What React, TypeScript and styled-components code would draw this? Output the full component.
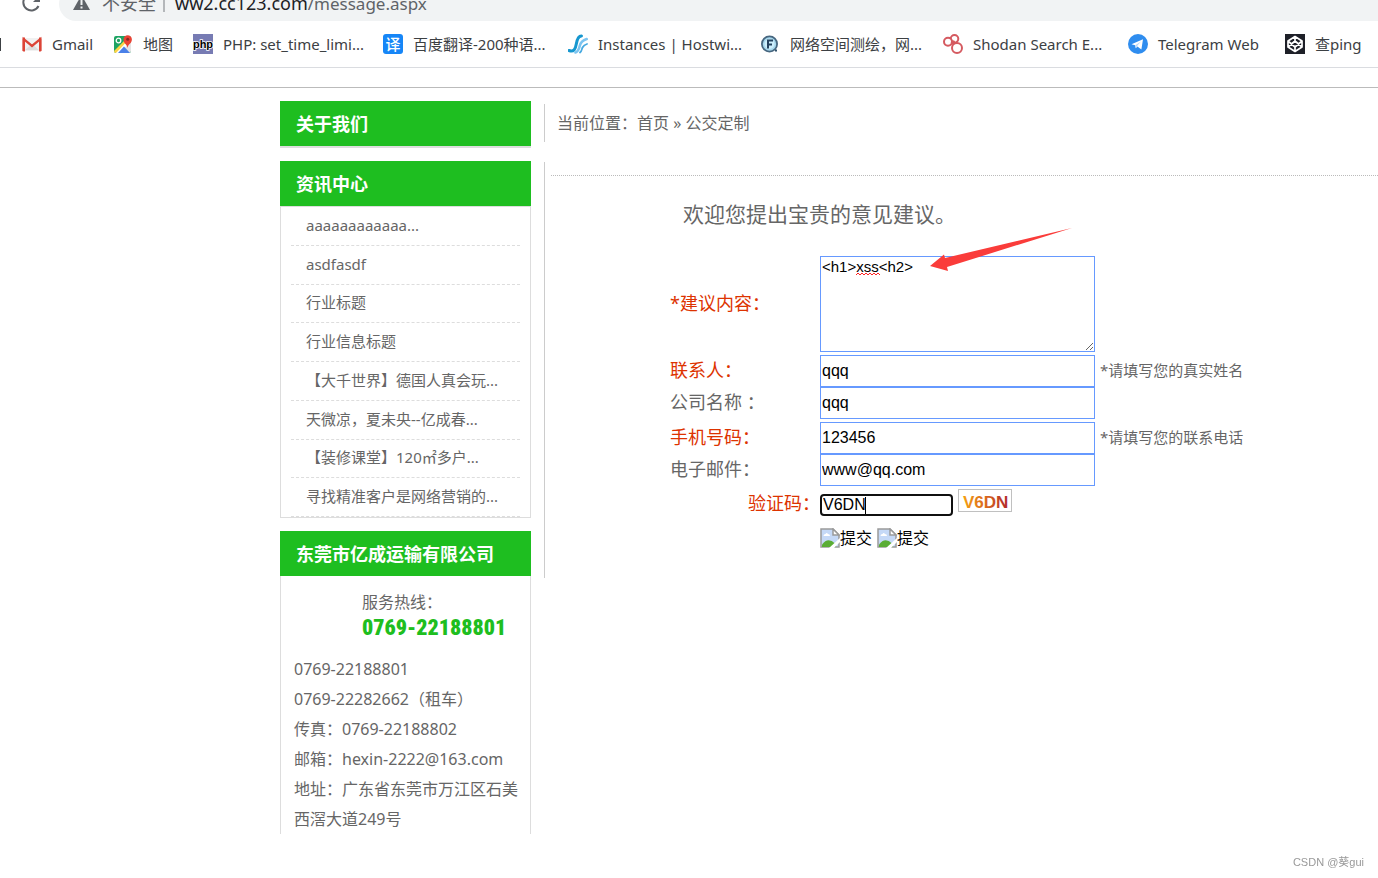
import React from "react";
import styled, { createGlobalStyle } from "styled-components";

const sans = `"Noto Sans", "Noto Sans CJK SC", sans-serif`;
const arial = `"Liberation Sans", "Noto Sans CJK SC", sans-serif`;
const green = "#1ebe20";
const red = "#dd3300";
const grey = "#666";
const line = "#ddd";

const GlobalStyle = createGlobalStyle`
  * { box-sizing: border-box; }
  body { margin: 0; background: #fff; color: ${grey}; font-family: ${sans}; font-size: 16px; }
  a { color: inherit; text-decoration: none; }
  h1, h2, p, ul { margin: 0; padding: 0; font-weight: 400; }
  ul { list-style: none; }
`;

/* Browser chrome */
const Toolbar = styled.div`
  display: flex;
  align-items: flex-end;
  gap: 18px;
  height: 21px;
  padding-left: 22px;
  overflow: hidden;
`;
const ToolButton = styled.button`
  display: flex;
  align-items: center;
  height: 34px;
  padding: 0 0 2px;
  border: 0;
  background: none;
  color: #5f6368;
`;
const AddressBar = styled.div`
  display: flex;
  flex: 1;
  align-items: center;
  height: 34px;
  padding: 0 0 2px 14px;
  border-radius: 17px 0 0 17px;
  background: #f1f3f4;
  color: #5f6368;
  font-size: 18px;
  line-height: 24px;
  white-space: pre;
`;
const Security = styled.span`
  margin-left: 12px;
`;
const Divider = styled.span`
  width: 2px;
  height: 18px;
  margin: 0 10px 0 7px;
  background: #b4b7ba;
`;
const Host = styled.span`
  color: #202124;
`;
const Path = styled.span`
  font-size: 17px;
`;
const Bookmarks = styled.nav`
  display: flex;
  align-items: center;
  gap: 21px;
  height: 47px;
  overflow: hidden;
  border-bottom: 1px solid #dadce0;
`;
const BookmarkTail = styled.span`
  width: 1px;
  height: 13px;
  background: #3c4043;
`;
const Bookmark = styled.a`
  display: flex;
  flex: none;
  align-items: center;
  gap: 10px;
  color: #3c4043;
  font-size: 15px;
  line-height: 20px;
  white-space: nowrap;
`;
const BookmarkLabel = styled.span<{ $width: number }>`
  width: ${(p) => p.$width}px;
`;

/* Page */
const Page = styled.div`
  display: flex;
  align-items: flex-start;
  gap: 13px;
  margin-top: 19px;
  padding: 13px 0 0 280px;
  border-top: 1px solid #bbb;
`;
const Sidebar = styled.aside`
  display: flex;
  flex: none;
  flex-direction: column;
  gap: 13px;
  width: 251px;
`;
const PanelTitle = styled.h2<{ $ruled?: boolean }>`
  padding: 2px 0 0 16px;
  border-bottom: ${(p) => (p.$ruled ? `2px solid ${line}` : "0")};
  background: ${green};
  background-clip: padding-box;
  color: #fff;
  font-size: 18px;
  font-weight: 700;
  line-height: 43px;
`;
const NewsList = styled.ul`
  display: flex;
  flex-direction: column;
  height: 312px;
  padding: 0 10px;
  border: 1px solid ${line};
`;
const NewsItem = styled.li`
  display: flex;
  flex: 1;
  align-items: center;
  padding: 0 0 2px 15px;
  border-bottom: 1px dashed ${line};
  font-size: 15px;
  line-height: 20px;
`;
const ContactPanel = styled.div`
  padding: 14px 0 0 13px;
  border: solid ${line};
  border-width: 0 1px;
`;
const Hotline = styled.p`
  padding-left: 68px;
  line-height: 24px;
`;
const HotlineNumber = styled.strong`
  display: block;
  color: ${green};
  font-family: "Roboto Condensed", "Liberation Sans", sans-serif;
  font-size: 22px;
  font-weight: 900;
  line-height: 28px;
  white-space: nowrap;
`;
const ContactLines = styled.div`
  padding-top: 12px;
  line-height: 30px;
`;

const Main = styled.main`
  flex: 1;
  min-width: 0;
  padding-top: 3px;
`;
const Breadcrumb = styled.nav`
  height: 38px;
  padding-left: 12px;
  border-left: 1px solid #ccc;
  line-height: 38px;
`;
const Content = styled.section`
  margin-top: 20px;
  min-height: 416px;
  padding: 13px 0 0 6px;
  border-left: 1px solid #ccc;
`;
const Heading = styled.h1`
  padding: 23px 0 0 132px;
  border-top: 1px dotted #bbb;
  font-size: 21px;
  line-height: 30px;
`;
const Form = styled.form`
  position: relative;
  display: flex;
  flex-direction: column;
  gap: 3px;
  margin-top: 27px;
  padding-left: 119px;
`;
const Field = styled.div`
  display: flex;
  align-items: center;
`;
const CodeField = styled(Field)`
  align-items: flex-end;
  height: 27px;
`;
const Label = styled.label<{ $required?: boolean; $right?: boolean }>`
  width: 150px;
  padding-bottom: 2px;
  color: ${(p) => (p.$required ? red : grey)};
  font-size: 18px;
  line-height: 22px;
  text-align: ${(p) => (p.$right ? "right" : "left")};
`;
const TextArea = styled.textarea`
  display: block;
  width: 275px;
  height: 96px;
  padding: 1px;
  border: 1px solid #6699ff;
  color: #000;
  font: 15px/18px ${arial};
`;
const TextInput = styled.input`
  width: 275px;
  height: 32px;
  padding: 1px;
  border: 1px solid #6699ff;
  color: #000;
  font: 16px/18px ${arial};
`;
const CodeBox = styled.span`
  position: relative;
  display: flex;
`;
const CodeInput = styled.input`
  width: 133px;
  height: 22px;
  padding: 0 1px;
  border: 2px solid #101010;
  border-radius: 4px;
  outline: 0;
  color: #000;
  font: 16px/18px ${arial};
`;
const Caret = styled.span`
  position: absolute;
  top: 3px;
  left: 45px;
  width: 1px;
  height: 17px;
  background: #000;
`;
const Captcha = styled.svg`
  align-self: flex-start;
  margin-left: 5px;
`;
const Hint = styled.span`
  margin-left: 5px;
  padding-bottom: 2px;
  font-size: 15px;
  line-height: 20px;
`;
const Actions = styled.div`
  display: flex;
  gap: 5px;
  padding: 9px 0 0 150px;
`;
const ImageButton = styled.button`
  display: flex;
  align-items: center;
  padding: 0;
  border: 0;
  background: none;
  color: #000;
  font: 16px/20px ${sans};
`;
const Squiggle = styled.svg`
  position: absolute;
  top: 16px;
  left: 305px;
`;
const Arrow = styled.svg`
  position: absolute;
  top: -28px;
  left: 379px;
  pointer-events: none;
`;
const Watermark = styled.footer`
  position: fixed;
  right: 14px;
  bottom: 8px;
  color: #999;
  font: 11px/16px ${arial};
`;

const GmailIcon = () => (
  <svg width="20" height="20" viewBox="0 0 20 20">
    <path d="M2 4h16v13H2z" fill="#f1f1f1" />
    <path d="M3 16l7-6 7 6z" fill="#ddd" />
    <path d="M1.800 17V5.200L10 12l8.200-6.800V17" fill="none" stroke="#dc4437" strokeWidth="2.400" />
    <path d="M.6 16.500V5q0-1.500 1.500-1.500H3v14H1.600q-1 0-1-1zM19.400 16.500V5q0-1.500-1.500-1.500H17v14h1.400q1 0 1-1z" fill="#dc4437" />
  </svg>
);
const MapsIcon = () => (
  <svg width="20" height="20" viewBox="0 0 20 20">
    <rect x="1" y="2" width="17" height="17" rx="2" fill="#1da362" />
    <path d="M18 8v9q0 2-2 2L9 12z" fill="#e4e4e4" />
    <path d="M1 17L13 5l4 3L5 19H3q-2 0-2-2z" fill="#fdd446" />
    <path d="M3 19L12 9.500l2 2L7 19z" fill="#fff" />
    <path d="M5 19l6-6.500 6 6.500z" fill="#4a80e8" />
    <circle cx="5.500" cy="6.500" r="2.300" fill="none" stroke="#fff" strokeWidth="1.300" />
    <path d="M14.500 14c-.5-4-4-4.500-4-8.500a4.200 4.200 0 018.400 0c0 4-4 4.500-4.400 8.500z" fill="#ea4335" />
    <circle cx="14.700" cy="5.200" r="1.500" fill="#8b2b22" />
  </svg>
);
const PhpIcon = () => (
  <svg width="20" height="20" viewBox="0 0 20 20">
    <rect width="20" height="20" fill="#777bb3" />
    <text x="10" y="14" textAnchor="middle" fontFamily="Liberation Sans" fontWeight="700" fontSize="11" fill="#000" stroke="#fff" strokeWidth="1.600" paintOrder="stroke">php</text>
  </svg>
);
const TranslateIcon = () => (
  <svg width="20" height="20" viewBox="0 0 20 20">
    <rect width="20" height="20" rx="3" fill="#1686f7" />
    <text x="10" y="15.500" textAnchor="middle" fontFamily="Noto Sans CJK SC" fontWeight="500" fontSize="15" fill="#fff">译</text>
  </svg>
);
const WavesIcon = () => (
  <svg width="20" height="20" viewBox="0 0 20 20" fill="none" strokeLinecap="round">
    <path d="M1 16.500c5 2 6.500-2 7.300-6.500S10.500 1.800 13.500 2" stroke="#1697cf" strokeWidth="3" />
    <path d="M7.500 18.500c3-1 3.500-3.500 4.200-6.500s3-5.800 7-7" stroke="#7cc4f0" strokeWidth="2.600" />
    <path d="M12 18.500c2-1.500 1.700-3.500 2.500-5s2-2.800 4.500-3.500" stroke="#46a9e0" strokeWidth="1.800" />
  </svg>
);
const FofaIcon = () => (
  <svg width="20" height="20" viewBox="0 0 20 20">
    <circle cx="9.500" cy="10" r="7.600" fill="#a9d9ee" stroke="#46667f" strokeWidth="1.800" />
    <circle cx="9.500" cy="10" r="5" fill="#cdeefb" />
    <path d="M8 14.500v-8h5M8 10.500h4" fill="none" stroke="#24425f" strokeWidth="2" />
    <path d="M15 16.500h2" stroke="#33536d" strokeWidth="2" />
  </svg>
);
const ShodanIcon = () => (
  <svg width="20" height="20" viewBox="0 0 20 20" fill="#fff" stroke="#d55a60" strokeWidth="2">
    <circle cx="11.500" cy="4.800" r="3.800" />
    <circle cx="5" cy="7.800" r="4" />
    <circle cx="14" cy="14" r="5" />
    <circle cx="10" cy="8.500" r="1.200" fill="#d55a60" />
  </svg>
);
const TelegramIcon = () => (
  <svg width="20" height="20" viewBox="0 0 20 20">
    <circle cx="10" cy="10" r="10" fill="#2f8def" />
    <path d="M3.500 10.200L15 5.200l-1.600 10.200-4-2.800-1.600 1.700-.7-3z" fill="#fff" />
    <path d="M7.300 11.300L13 7.500l-4.200 4.700-1 1.900z" fill="#b6d5f8" />
  </svg>
);
const PingIcon = () => (
  <svg width="20" height="20" viewBox="0 0 20 20">
    <rect width="20" height="20" fill="#1e2028" />
    <path d="M10 2.500l7 4.500v6l-7 4.500L3 13V7zM10 2.500V7m0 6v4.500M3 7l7 6 7-6M3 13l7-6 7 6" fill="none" stroke="#fff" strokeWidth="1.700" strokeLinejoin="round" />
  </svg>
);
const ReloadIcon = () => (
  <svg width="19" height="20" viewBox="0 0 19 20">
    <path d="M16 5a8 8 0 10.500 8" fill="none" stroke="currentColor" strokeWidth="2" />
    <path d="M18 2v7h-7z" fill="currentColor" />
  </svg>
);
const WarningIcon = () => (
  <svg width="17" height="16" viewBox="0 0 17 16">
    <path d="M8.500 0L17 15H0z" fill="#5f6368" />
    <path d="M8.500 5v5M8.500 11.500v2" stroke="#f1f3f4" strokeWidth="2" />
  </svg>
);
const BrokenImage = () => (
  <svg width="20" height="20" viewBox="0 0 20 20">
    <path d="M1 1h12l6 6v12H1z" fill="#c5d9f7" stroke="#9a9a9a" strokeWidth="1.500" />
    <path d="M13 1v6h6z" fill="#fff" stroke="#9a9a9a" strokeWidth="1.500" />
    <path d="M3.500 8q0-2 2-2 1-2 2.500 0 2 0 2 2z" fill="#fff" />
    <path d="M2 18v-1.500q6-8 13-1l1 3.500H2z" fill="#5aad35" />
    <path d="M9 20L20 10v4l-6 6z" fill="#fff" />
  </svg>
);

const bookmarks: [React.FC, string, number][] = [
  [GmailIcon, "Gmail", 40],
  [MapsIcon, "地图", 29],
  [PhpIcon, "PHP: set_time_limi...", 139],
  [TranslateIcon, "百度翻译-200种语...", 134],
  [WavesIcon, "Instances | Hostwi...", 141],
  [FofaIcon, "网络空间测绘，网...", 132],
  [ShodanIcon, "Shodan Search E...", 134],
  [TelegramIcon, "Telegram Web", 106],
  [PingIcon, "查ping", 48],
];

const news = [
  "aaaaaaaaaaaa...",
  "asdfasdf",
  "行业标题",
  "行业信息标题",
  "【大千世界】德国人真会玩...",
  "天微凉，夏未央--亿成春...",
  "【装修课堂】120㎡多户...",
  "寻找精准客户是网络营销的...",
];

type TextFieldProps = { id: string; label: string; value: string; required?: boolean; hint?: string };
const TextField = ({ id, label, value, required, hint }: TextFieldProps) => (
  <Field>
    <Label htmlFor={id} $required={required}>{label}</Label>
    <TextInput id={id} defaultValue={value} />
    {hint && <Hint>{hint}</Hint>}
  </Field>
);

export default function App() {
  return (
    <>
      <GlobalStyle />
      <Toolbar>
        <ToolButton aria-label="重新加载"><ReloadIcon /></ToolButton>
        <AddressBar>
          <WarningIcon />
          <Security>不安全</Security>
          <Divider />
          <span>
            <Host>ww2.cc123.com</Host>
            <Path>/message.aspx</Path>
          </span>
        </AddressBar>
      </Toolbar>
      <Bookmarks>
        <BookmarkTail />
        {bookmarks.map(([Icon, text, width]) => (
          <Bookmark href="#" key={text}>
            <Icon />
            <BookmarkLabel $width={width}>{text}</BookmarkLabel>
          </Bookmark>
        ))}
      </Bookmarks>
      <Page>
        <Sidebar>
          <PanelTitle $ruled>关于我们</PanelTitle>
          <section>
            <PanelTitle>资讯中心</PanelTitle>
            <NewsList>
              {news.map((item) => (
                <NewsItem key={item}><a href="#">{item}</a></NewsItem>
              ))}
            </NewsList>
          </section>
          <section>
            <PanelTitle>东莞市亿成运输有限公司</PanelTitle>
            <ContactPanel>
              <Hotline>
                服务热线：
                <HotlineNumber>0769-22188801</HotlineNumber>
              </Hotline>
              <ContactLines>
                <p>0769-22188801</p>
                <p>0769-22282662（租车）</p>
                <p>传真：0769-22188802</p>
                <p>邮箱：hexin-2222@163.com</p>
                <p>地址：广东省东莞市万江区石美西滘大道249号</p>
              </ContactLines>
            </ContactPanel>
          </section>
        </Sidebar>
        <Main>
          <Breadcrumb>
            当前位置：<a href="#">首页</a> » <a href="#">公交定制</a>
          </Breadcrumb>
          <Content>
            <Heading>欢迎您提出宝贵的意见建议。</Heading>
            <Form onSubmit={(e) => e.preventDefault()}>
              <Field>
                <Label htmlFor="content" $required>*建议内容：</Label>
                <TextArea id="content" spellCheck={false} defaultValue="<h1>xss<h2>" />
              </Field>
              <div>
                <TextField id="contact" label="联系人：" value="qqq" required hint="*请填写您的真实姓名" />
                <TextField id="company" label="公司名称 ：" value="qqq" />
              </div>
              <div>
                <TextField id="mobile" label="手机号码：" value="123456" required hint="*请填写您的联系电话" />
                <TextField id="email" label="电子邮件：" value="www@qq.com" />
              </div>
              <CodeField>
                <Label htmlFor="code" $required $right>验证码：</Label>
                <CodeBox>
                  <CodeInput id="code" defaultValue="V6DN" />
                  <Caret />
                </CodeBox>
                <Captcha width="54" height="23" viewBox="0 0 54 23">
                  <defs>
                    <linearGradient id="codeFill">
                      <stop offset="0" stopColor="#f5a010" />
                      <stop offset=".5" stopColor="#d9681c" />
                      <stop offset="1" stopColor="#b02828" />
                    </linearGradient>
                  </defs>
                  <rect x=".5" y=".5" width="53" height="22" fill="#fff" stroke="#c0c0c0" />
                  <text x="5" y="19" fontFamily="Liberation Sans" fontSize="17" fontWeight="700" fill="url(#codeFill)">V6DN</text>
                </Captcha>
              </CodeField>
              <Actions>
                <ImageButton type="submit"><BrokenImage />提交</ImageButton>
                <ImageButton type="reset"><BrokenImage />提交</ImageButton>
              </Actions>
              <Squiggle width="24" height="4" viewBox="0 0 24 4">
                <path d="M0 3l2-2 2 2 2-2 2 2 2-2 2 2 2-2 2 2 2-2 2 2 2-2 2 2" fill="none" stroke="#f22" />
              </Squiggle>
              <Arrow width="144" height="44" viewBox="0 0 144 44">
                <path d="M142 0L15 30l-1-3.500L0 38l18 5-1-4z" fill="#fa3c3a" />
              </Arrow>
            </Form>
          </Content>
        </Main>
      </Page>
      <Watermark>CSDN @葵gui</Watermark>
    </>
  );
}
